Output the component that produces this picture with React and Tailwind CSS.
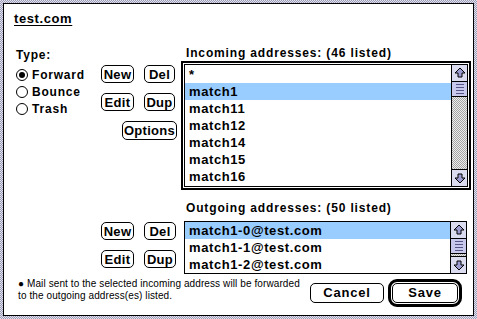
import React from 'react';

const sans = "font-['Liberation_Sans',Arial,sans-serif]";

const MacButton = ({ children, className = '' }) => (
  <button
    className={`h-[18px] rounded-[5px] border border-black bg-white text-[13px] font-bold leading-none tracking-[0.3px] text-black flex items-center justify-center ${className}`}
  >
    {children}
  </button>
);

const Radio = ({ label, checked }) => (
  <div className="h-[17px] flex items-center gap-[4px]">
    <span className="w-[12px] h-[12px] rounded-full border border-black bg-white flex items-center justify-center">
      {checked && <span className="w-[6px] h-[6px] rounded-full bg-black" />}
    </span>
    <span className="text-[12px] font-bold tracking-[0.8px]">{label}</span>
  </div>
);

const Arrow = ({ down }) => (
  <div className="h-[16px] w-full bg-[#dcdcf0] flex items-center justify-center">
    <svg width="12" height="12" viewBox="0 0 12 12" className={down ? 'rotate-180' : ''}>
      <polygon
        points="6,1 11,6 8,6 8,10 4,10 4,6 1,6"
        fill="#9c9cd0"
        stroke="#000"
        strokeWidth="1"
        strokeLinejoin="miter"
      />
    </svg>
  </div>
);

const ScrollBar = () => (
  <div className="w-[16px] border-l border-black flex flex-col">
    <Arrow />
    <div className="h-[16px] border-y border-black bg-[#c8c8ec] flex flex-col items-center justify-center gap-[2px]">
      <span className="w-[8px] h-[1px] bg-[#555588]" />
      <span className="w-[8px] h-[1px] bg-[#555588]" />
      <span className="w-[8px] h-[1px] bg-[#555588]" />
      <span className="w-[8px] h-[1px] bg-[#555588]" />
    </div>
    <div className="flex-1 bg-[repeating-conic-gradient(#a4a4a4_0_25%,#ededed_0_50%)] bg-[length:2px_2px]" />
    <div className="border-t border-black">
      <Arrow down />
    </div>
  </div>
);

const ListRow = ({ text, selected }) => (
  <div
    className={`h-[17px] pl-[4px] flex items-center text-[13px] font-bold tracking-[0.6px] ${
      selected ? 'bg-[#99ccff]' : ''
    }`}
  >
    {text}
  </div>
);

const incoming = ['*', 'match1', 'match11', 'match12', 'match14', 'match15', 'match16'];
const outgoing = ['match1-0@test.com', 'match1-1@test.com', 'match1-2@test.com'];

export default function App() {
  return (
    <div
      className={`${sans} w-[477px] h-[319px] p-[3px] bg-[repeating-conic-gradient(#9a9ab4_0_25%,#e4e4f0_0_50%)] bg-[length:2px_2px] text-black`}
    >
      <div className="h-full border border-black bg-white flex flex-col pl-[10px]">
        {/* Title */}
        <div className="mt-[5px] h-[16px] text-[13px] font-bold underline underline-offset-2 tracking-[0.6px]">
          test.com
        </div>

        {/* Incoming section */}
        <div className="mt-[15px] h-[150px] flex">
          <div className="ml-[2px] w-[85px] flex flex-col">
            <div className="mt-[6px] h-[14px] text-[12px] font-bold tracking-[0.8px]">Type:</div>
            <div className="mt-[6px] flex flex-col">
              <Radio label="Forward" checked />
              <Radio label="Bounce" />
              <Radio label="Trash" />
            </div>
          </div>
          <div className="w-[80px] flex flex-col pt-[25px]">
            <div className="flex gap-[10px]">
              <MacButton className="w-[33px]">New</MacButton>
              <MacButton className="w-[31px]">Del</MacButton>
            </div>
            <div className="flex gap-[10px] mt-[10px]">
              <MacButton className="w-[33px]">Edit</MacButton>
              <MacButton className="w-[31px]">Dup</MacButton>
            </div>
            <MacButton className="w-[55px] ml-[21px] mt-[10px] h-[19px]">Options</MacButton>
          </div>
          <div className="w-[290px] flex flex-col">
            <div className="mt-[4px] h-[14px] pl-[5px] text-[12px] font-bold tracking-[0.85px]">
              Incoming addresses: (46 listed)
            </div>
            <div className="mt-[3px] h-[129px] border-2 border-black p-[1px]">
              <div className="h-full border border-black flex">
                <div className="flex-1 flex flex-col pt-[1px]">
                  {incoming.map((t) => (
                    <ListRow key={t} text={t} selected={t === 'match1'} />
                  ))}
                </div>
                <ScrollBar />
              </div>
            </div>
          </div>
        </div>

        {/* Outgoing section */}
        <div className="h-[86px] flex">
          <div className="ml-[2px] w-[85px]" />
          <div className="w-[80px] flex flex-col pt-[32px]">
            <div className="flex gap-[10px]">
              <MacButton className="w-[33px]">New</MacButton>
              <MacButton className="w-[32px]">Del</MacButton>
            </div>
            <div className="flex gap-[10px] mt-[10px]">
              <MacButton className="w-[33px]">Edit</MacButton>
              <MacButton className="w-[32px]">Dup</MacButton>
            </div>
          </div>
          <div className="ml-[3px] w-[283px] flex flex-col">
            <div className="mt-[9px] h-[14px] pl-[2px] text-[12px] font-bold tracking-[0.85px]">
              Outgoing addresses: (50 listed)
            </div>
            <div className="mt-[8px] h-[53px] border border-black flex">
              <div className="flex-1 flex flex-col">
                {outgoing.map((t, i) => (
                  <ListRow key={t} text={t} selected={i === 0} />
                ))}
              </div>
              <ScrollBar />
            </div>
          </div>
        </div>

        {/* Footer */}
        <div className="flex-1 flex items-center pr-[11px]">
          <div className="ml-[4px] mb-[6px] text-[10px] leading-[12px] tracking-[0.1px] self-start mt-[2px]">
            <div>● Mail sent to the selected incoming address will be forwarded</div>
            <div>to the outgoing address(es) listed.</div>
          </div>
          <div className="ml-auto flex items-center gap-[4px] mb-[6px]">
            <MacButton className="w-[74px] h-[20px] tracking-[0.8px]">Cancel</MacButton>
            <div className="w-[74px] h-[28px] rounded-[9px] border-[3px] border-black p-[1px] bg-white">
              <MacButton className="w-full h-full tracking-[0.8px]">Save</MacButton>
            </div>
          </div>
        </div>
      </div>
    </div>
  );
}
